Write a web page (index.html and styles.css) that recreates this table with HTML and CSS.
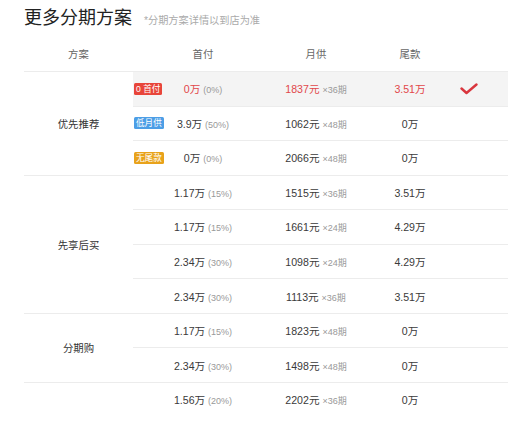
FILE: index.html
```html
<!DOCTYPE html>
<html lang="zh">
<head>
<meta charset="utf-8">
<link rel="stylesheet" href="styles.css">
</head>
<body>
<div class="page">
  <div class="title-bar">
    <h1 class="title">更多分期方案</h1>
    <span class="subtitle">*分期方案详情以到店为准</span>
  </div>
  <table class="plans">
    <colgroup>
      <col class="c1"><col class="c2"><col class="c3"><col class="c4"><col class="c5">
    </colgroup>
    <thead>
      <tr><th>方案</th><th>首付</th><th>月供</th><th>尾款</th><th></th></tr>
    </thead>
    <tbody>
      <tr class="group active">
        <td class="label" rowspan="3">优先推荐</td>
        <td class="down"><span class="badge red">0 首付</span><span class="num">0万</span> <span class="sm">(0%)</span></td>
        <td><span class="num">1837元</span> <span class="sm">×36期</span></td>
        <td><span class="num">3.51万</span></td>
        <td class="check"><svg width="18" height="12" viewBox="0 0 18 12"><path d="M1.5 5.5 L6.5 10 L16.5 1.5" fill="none" stroke="#d9363e" stroke-width="2.4" stroke-linecap="round" stroke-linejoin="round"/></svg></td>
      </tr>
      <tr>
        <td class="down"><span class="badge blue">低月供</span><span class="num">3.9万</span> <span class="sm">(50%)</span></td>
        <td><span class="num">1062元</span> <span class="sm">×48期</span></td>
        <td><span class="num">0万</span></td>
        <td></td>
      </tr>
      <tr>
        <td class="down"><span class="badge orange">无尾款</span><span class="num">0万</span> <span class="sm">(0%)</span></td>
        <td><span class="num">2066元</span> <span class="sm">×48期</span></td>
        <td><span class="num">0万</span></td>
        <td></td>
      </tr>
      <tr class="group">
        <td class="label" rowspan="4">先享后买</td>
        <td><span class="num">1.17万</span> <span class="sm">(15%)</span></td>
        <td><span class="num">1515元</span> <span class="sm">×36期</span></td>
        <td><span class="num">3.51万</span></td>
        <td></td>
      </tr>
      <tr>
        <td><span class="num">1.17万</span> <span class="sm">(15%)</span></td>
        <td><span class="num">1661元</span> <span class="sm">×24期</span></td>
        <td><span class="num">4.29万</span></td>
        <td></td>
      </tr>
      <tr>
        <td><span class="num">2.34万</span> <span class="sm">(30%)</span></td>
        <td><span class="num">1098元</span> <span class="sm">×24期</span></td>
        <td><span class="num">4.29万</span></td>
        <td></td>
      </tr>
      <tr>
        <td><span class="num">2.34万</span> <span class="sm">(30%)</span></td>
        <td><span class="num">1113元</span> <span class="sm">×36期</span></td>
        <td><span class="num">3.51万</span></td>
        <td></td>
      </tr>
      <tr class="group">
        <td class="label" rowspan="2">分期购</td>
        <td><span class="num">1.17万</span> <span class="sm">(15%)</span></td>
        <td><span class="num">1823元</span> <span class="sm">×48期</span></td>
        <td><span class="num">0万</span></td>
        <td></td>
      </tr>
      <tr>
        <td><span class="num">2.34万</span> <span class="sm">(30%)</span></td>
        <td><span class="num">1498元</span> <span class="sm">×48期</span></td>
        <td><span class="num">0万</span></td>
        <td></td>
      </tr>
      <tr class="group">
        <td class="label"></td>
        <td><span class="num">1.56万</span> <span class="sm">(20%)</span></td>
        <td><span class="num">2202元</span> <span class="sm">×36期</span></td>
        <td><span class="num">0万</span></td>
        <td></td>
      </tr>
    </tbody>
  </table>
</div>
</body>
</html>
```

FILE: styles.css
```css
html, body {
  margin: 0;
  padding: 0;
  background: #fff;
}
body {
  font-family: "Liberation Sans", "Noto Sans CJK SC", sans-serif;
  color: #333;
}
.page {
  padding-left: 24px;
  overflow: hidden;
  width: 484px;
}
.title-bar {
  display: flex;
  align-items: baseline;
  gap: 12px;
  height: 36.5px;
  padding-top: 6px;
  box-sizing: border-box;
}
.title {
  margin: 0;
  font-size: 18px;
  font-weight: normal;
  color: #222;
  line-height: 24px;
}
.subtitle {
  font-size: 10.2px;
  color: #aaa;
}
.plans {
  width: 484px;
  border-collapse: collapse;
  table-layout: fixed;
}
.c1 { width: 109px; }
.c2 { width: 140px; }
.c3 { width: 86px; }
.c4 { width: 102px; }
.c5 { width: 47px; }
.plans th {
  height: 34.5px;
  padding: 0;
  font-weight: normal;
  font-size: 10.4px;
  color: #666;
  text-align: center;
  vertical-align: middle;
}
.plans td {
  height: 34.56px;
  box-sizing: border-box;
  padding: 0;
  border-top: 1px solid #ececec;
  text-align: center;
  vertical-align: middle;
  font-size: 10.4px;
  white-space: nowrap;
}
.plans td.label {
  color: #333;
  font-size: 10.4px;
}
.plans td.down {
  position: relative;
}
.num {
  font-size: 10.6px;
  color: #3a3a3a;
}
.sm {
  font-size: 9px;
  color: #999;
}
.active td:not(.label) {
  background: #f4f4f4;
}
.active .num {
  color: #e2474a;
}
.badge {
  position: absolute;
  left: 1px;
  top: 50%;
  transform: translateY(-50%);
  height: 12px;
  line-height: 12px;
  padding: 0 2px;
  border-radius: 1.5px;
  font-size: 8.6px;
  color: #fff;
}
.badge.red { background: #e8453a; }
.badge.blue { background: #4c9ee6; }
.badge.orange { background: #e8a21a; }
.check {
  text-align: left !important;
}
.check svg {
  display: block;
  margin-left: -1px;
}
```
